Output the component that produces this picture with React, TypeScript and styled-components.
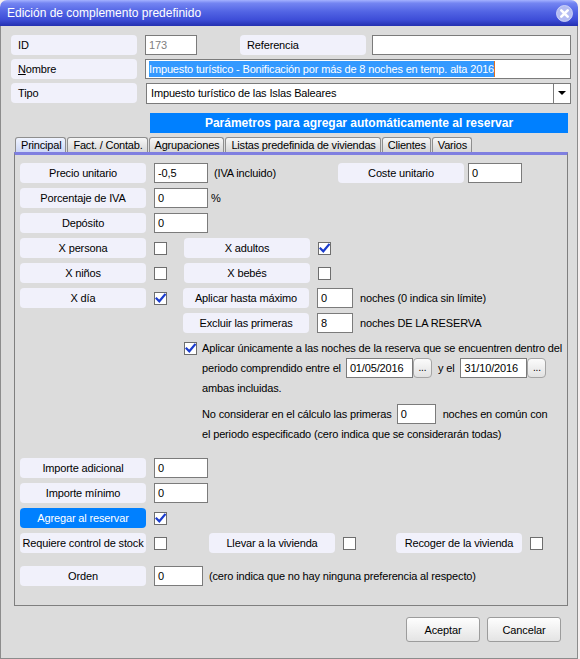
import React from "react";
import styled, { createGlobalStyle } from "styled-components";

const Global = createGlobalStyle`
  html, body { margin: 0; padding: 0; background: #f6f0f0; }
  body {
    font-family: "Liberation Sans", Arial, sans-serif;
    font-size: 11px;
    letter-spacing: -0.15px;
    color: #000;
  }
  * { box-sizing: border-box; }
`;

const Window = styled.div`
  width: 578px;
  height: 659px;
  display: flex;
  flex-direction: column;
`;

const TitleBar = styled.div`
  flex: none;
  height: 26px;
  border-radius: 7px 7px 0 0;
  background: linear-gradient(
    to bottom,
    #a4b2ff 0%,
    #7485f2 12%,
    #5264e4 45%,
    #3e4ed8 75%,
    #2430b0 100%
  );
  display: flex;
  align-items: center;
  justify-content: space-between;
  padding: 0 5px 0 7px;
  color: #fff;
  font-size: 12px;
  letter-spacing: 0;
`;

const Body = styled.div`
  flex: 1;
  background: #dcdcdc;
  border: 1px solid #8c8c8c;
  border-top: none;
  padding: 9px 6px 0 10px;
  display: flex;
  flex-direction: column;
`;

const TopRows = styled.div`
  display: flex;
  flex-direction: column;
  gap: 4px;
`;

const Row = styled.div<{ $mt?: number; $pl?: number; $pr?: number }>`
  display: flex;
  align-items: center;
  height: 20px;
  margin-top: ${(p) => p.$mt ?? 0}px;
  padding-left: ${(p) => p.$pl ?? 0}px;
  padding-right: ${(p) => p.$pr ?? 0}px;
`;

const FieldLabel = styled.div<{ $active?: boolean; $left?: boolean; $ml?: number }>`
  flex: none;
  width: 126px;
  height: 20px;
  margin-left: ${(p) => p.$ml ?? 0}px;
  border-radius: 4px;
  background: ${(p) => (p.$active ? "#0080ff" : "#f1f1fb")};
  color: ${(p) => (p.$active ? "#fff" : "#000")};
  display: flex;
  align-items: center;
  justify-content: ${(p) => (p.$left ? "flex-start" : "center")};
  padding-left: ${(p) => (p.$left ? 7 : 0)}px;
  white-space: nowrap;
`;

const PushedLabel = styled(FieldLabel)`
  margin-left: auto;
`;

const TextBox = styled.div<{ $w?: number; $ml?: number; $muted?: boolean }>`
  flex: ${(p) => (p.$w ? "none" : "1")};
  width: ${(p) => (p.$w ? `${p.$w}px` : "auto")};
  height: 20px;
  margin-left: ${(p) => p.$ml ?? 8}px;
  background: #fff;
  border: 1px solid #7b7b7b;
  padding: 0 3px;
  display: flex;
  align-items: center;
  color: ${(p) => (p.$muted ? "#808080" : "#000")};
  white-space: nowrap;
  overflow: hidden;
`;

const Selected = styled.span`
  background: #3399ff;
  color: #fff;
  line-height: 16px;
  border-right: 1px solid #e07020;
`;

const Select = styled.div`
  flex: 1;
  height: 21px;
  margin-left: 9px;
  background: #fff;
  border: 1px solid #7b7b7b;
  display: flex;
  align-items: stretch;
`;

const SelectText = styled.div`
  flex: 1;
  display: flex;
  align-items: center;
  padding-left: 4px;
  white-space: nowrap;
`;

const SelectArrow = styled.div`
  flex: none;
  width: 17px;
  border-left: 1px solid #7b7b7b;
  display: flex;
  align-items: center;
  justify-content: center;
  &::after {
    content: "";
    border-left: 4px solid transparent;
    border-right: 4px solid transparent;
    border-top: 4px solid #000;
  }
`;

const Banner = styled.div`
  height: 20px;
  margin: 10px 3px 0 139px;
  background: #0080ff;
  color: #fff;
  font-weight: bold;
  font-size: 12px;
  letter-spacing: 0;
  display: flex;
  align-items: center;
  justify-content: center;
`;

const TabStrip = styled.div`
  display: flex;
  gap: 1px;
  margin: 4px 3px 0 4px;
  height: 15px;
`;

const Tab = styled.div<{ $active?: boolean }>`
  height: 15px;
  padding: 0 4px 0 5px;
  letter-spacing: -0.2px;
  border: 1px solid #8e8e8e;
  border-bottom: none;
  border-radius: 3px 3px 0 0;
  background: ${(p) =>
    p.$active
      ? "linear-gradient(to bottom, #f0f4ff, #cdd7f6)"
      : "linear-gradient(to bottom, #f7f7f7, #d6d6d6)"};
  display: flex;
  align-items: center;
  white-space: nowrap;
`;

const Panel = styled.div`
  margin: 0 3px;
  border: 1px solid #7f7f7f;
  border-top: 3px solid #7f7fe0;
  padding: 8px 0 19px 5px;
  display: flex;
  flex-direction: column;
`;

const Note = styled.span<{ $ml?: number }>`
  margin-left: ${(p) => p.$ml ?? 0}px;
  white-space: nowrap;
`;

const Box = styled.span<{ $ml?: number }>`
  flex: none;
  width: 13px;
  height: 13px;
  margin-left: ${(p) => p.$ml ?? 8}px;
  background: #fff;
  border: 1px solid #6e6e6e;
  display: flex;
  align-items: center;
  justify-content: center;
`;

const Para = styled.div`
  margin: 5px 0 0 164px;
  display: flex;
  flex-direction: column;
`;

const ParaLine = styled.div<{ $mt?: number }>`
  display: flex;
  align-items: center;
  height: 20px;
  padding-left: 18px;
  margin-top: ${(p) => p.$mt ?? 0}px;
  white-space: nowrap;
`;

const FirstLine = styled.div`
  display: flex;
  align-items: center;
  height: 20px;
  gap: 5px;
  white-space: nowrap;
`;

const DateGroup = styled.div<{ $ml?: number }>`
  display: flex;
  align-items: center;
  margin-left: ${(p) => p.$ml ?? 0}px;
`;

const DotsButton = styled.div`
  width: 19px;
  height: 20px;
  border: 1px solid #a4a4a4;
  border-radius: 4px;
  background: linear-gradient(to bottom, #fbfbfb, #e2e2e2);
  display: flex;
  align-items: center;
  justify-content: center;
  font-size: 10px;
  padding-bottom: 2px;
`;

const Footer = styled.div`
  display: flex;
  justify-content: flex-end;
  gap: 7px;
  margin-top: 11px;
  padding-right: 10px;
`;

const Button = styled.div`
  width: 74px;
  height: 25px;
  border: 1px solid #9c9c9c;
  border-radius: 3px;
  background: linear-gradient(to bottom, #fefefe, #e4e4e4);
  display: flex;
  align-items: center;
  justify-content: center;
`;

const Check = ({ checked, ml }: { checked?: boolean; ml?: number }) => (
  <Box $ml={ml}>
    {checked && (
      <svg width="11" height="11" viewBox="0 0 11 11">
        <path
          d="M1.5 5.5 L4.3 8.3 L9.8 1.8"
          fill="none"
          stroke="#1b3ccc"
          strokeWidth="2.2"
          strokeLinecap="square"
        />
      </svg>
    )}
  </Box>
);

const CloseIcon = () => (
  <svg width="17" height="17" viewBox="0 0 17 17">
    <circle cx="8.5" cy="8.5" r="8" fill="#b4bcf2" stroke="#d8ddfb" strokeWidth="0.8" />
    <path d="M5.3 5.3 L11.7 11.7 M11.7 5.3 L5.3 11.7" stroke="#fff" strokeWidth="2.6" strokeLinecap="round" />
  </svg>
);

export default function App() {
  return (
    <>
      <Global />
      <Window>
        <TitleBar>
          <span>Edición de complemento predefinido</span>
          <CloseIcon />
        </TitleBar>
        <Body>
          <TopRows>
            <Row>
              <FieldLabel $left>ID</FieldLabel>
              <TextBox $w={52} $muted>173</TextBox>
              <FieldLabel $left $ml={43}>Referencia</FieldLabel>
              <TextBox $ml={6} />
            </Row>
            <Row>
              <FieldLabel $left>
                <span>
                  <u>N</u>ombre
                </span>
              </FieldLabel>
              <TextBox>
                <Selected>Impuesto turístico - Bonificación por más de 8 noches en temp. alta 2016</Selected>
              </TextBox>
            </Row>
            <Row>
              <FieldLabel $left>Tipo</FieldLabel>
              <Select>
                <SelectText>Impuesto turístico de las Islas Baleares</SelectText>
                <SelectArrow />
              </Select>
            </Row>
          </TopRows>

          <Banner>Parámetros para agregar automáticamente al reservar</Banner>

          <TabStrip>
            <Tab $active>Principal</Tab>
            <Tab>Fact. / Contab.</Tab>
            <Tab>Agrupaciones</Tab>
            <Tab>Listas predefinida de viviendas</Tab>
            <Tab>Clientes</Tab>
            <Tab>Varios</Tab>
          </TabStrip>

          <Panel>
            <Row $pr={45}>
              <FieldLabel>Precio unitario</FieldLabel>
              <TextBox $w={54}>-0,5</TextBox>
              <Note $ml={6}>(IVA incluido)</Note>
              <PushedLabel>Coste unitario</PushedLabel>
              <TextBox $w={54} $ml={4}>0</TextBox>
            </Row>
            <Row $mt={5}>
              <FieldLabel>Porcentaje de IVA</FieldLabel>
              <TextBox $w={54}>0</TextBox>
              <Note $ml={3}>%</Note>
            </Row>
            <Row $mt={5}>
              <FieldLabel>Depósito</FieldLabel>
              <TextBox $w={54}>0</TextBox>
            </Row>
            <Row $mt={5}>
              <FieldLabel>X persona</FieldLabel>
              <Check />
              <FieldLabel $ml={17}>X adultos</FieldLabel>
              <Check checked />
            </Row>
            <Row $mt={5}>
              <FieldLabel>X niños</FieldLabel>
              <Check />
              <FieldLabel $ml={17}>X bebés</FieldLabel>
              <Check />
            </Row>
            <Row $mt={5}>
              <FieldLabel>X día</FieldLabel>
              <Check checked />
              <FieldLabel $ml={16}>Aplicar hasta máximo</FieldLabel>
              <TextBox $w={36}>0</TextBox>
              <Note $ml={7}>noches (0 indica sin límite)</Note>
            </Row>
            <Row $mt={5} $pl={163}>
              <FieldLabel>Excluir las primeras</FieldLabel>
              <TextBox $w={36}>8</TextBox>
              <Note $ml={7}>noches DE LA RESERVA</Note>
            </Row>

            <Para>
              <FirstLine>
                <Check checked ml={0} />
                <span>Aplicar únicamente a las noches de la reserva que se encuentren dentro del</span>
              </FirstLine>
              <ParaLine>
                <span>periodo comprendido entre el</span>
                <DateGroup $ml={5}>
                  <TextBox $w={67} $ml={0}>01/05/2016</TextBox>
                  <DotsButton>...</DotsButton>
                </DateGroup>
                <Note $ml={6}>y el</Note>
                <DateGroup $ml={6}>
                  <TextBox $w={67} $ml={0}>31/10/2016</TextBox>
                  <DotsButton>...</DotsButton>
                </DateGroup>
              </ParaLine>
              <ParaLine>ambas incluidas.</ParaLine>
              <ParaLine $mt={6}>
                <span>No considerar en el cálculo las primeras</span>
                <TextBox $w={39} $ml={5}>0</TextBox>
                <Note $ml={7}>noches en común con</Note>
              </ParaLine>
              <ParaLine>el periodo especificado (cero indica que se considerarán todas)</ParaLine>
            </Para>

            <Row $mt={14}>
              <FieldLabel>Importe adicional</FieldLabel>
              <TextBox $w={54}>0</TextBox>
            </Row>
            <Row $mt={5}>
              <FieldLabel>Importe mínimo</FieldLabel>
              <TextBox $w={54}>0</TextBox>
            </Row>
            <Row $mt={5}>
              <FieldLabel $active>Agregar al reservar</FieldLabel>
              <Check checked />
            </Row>
            <Row $mt={5}>
              <FieldLabel>Requiere control de stock</FieldLabel>
              <Check />
              <FieldLabel $ml={42}>Llevar a la vivienda</FieldLabel>
              <Check />
              <FieldLabel $ml={40}>Recoger de la vivienda</FieldLabel>
              <Check />
            </Row>
            <Row $mt={13}>
              <FieldLabel>Orden</FieldLabel>
              <TextBox $w={49}>0</TextBox>
              <Note $ml={6}>(cero indica que no hay ninguna preferencia al respecto)</Note>
            </Row>
          </Panel>

          <Footer>
            <Button>Aceptar</Button>
            <Button>Cancelar</Button>
          </Footer>
        </Body>
      </Window>
    </>
  );
}
